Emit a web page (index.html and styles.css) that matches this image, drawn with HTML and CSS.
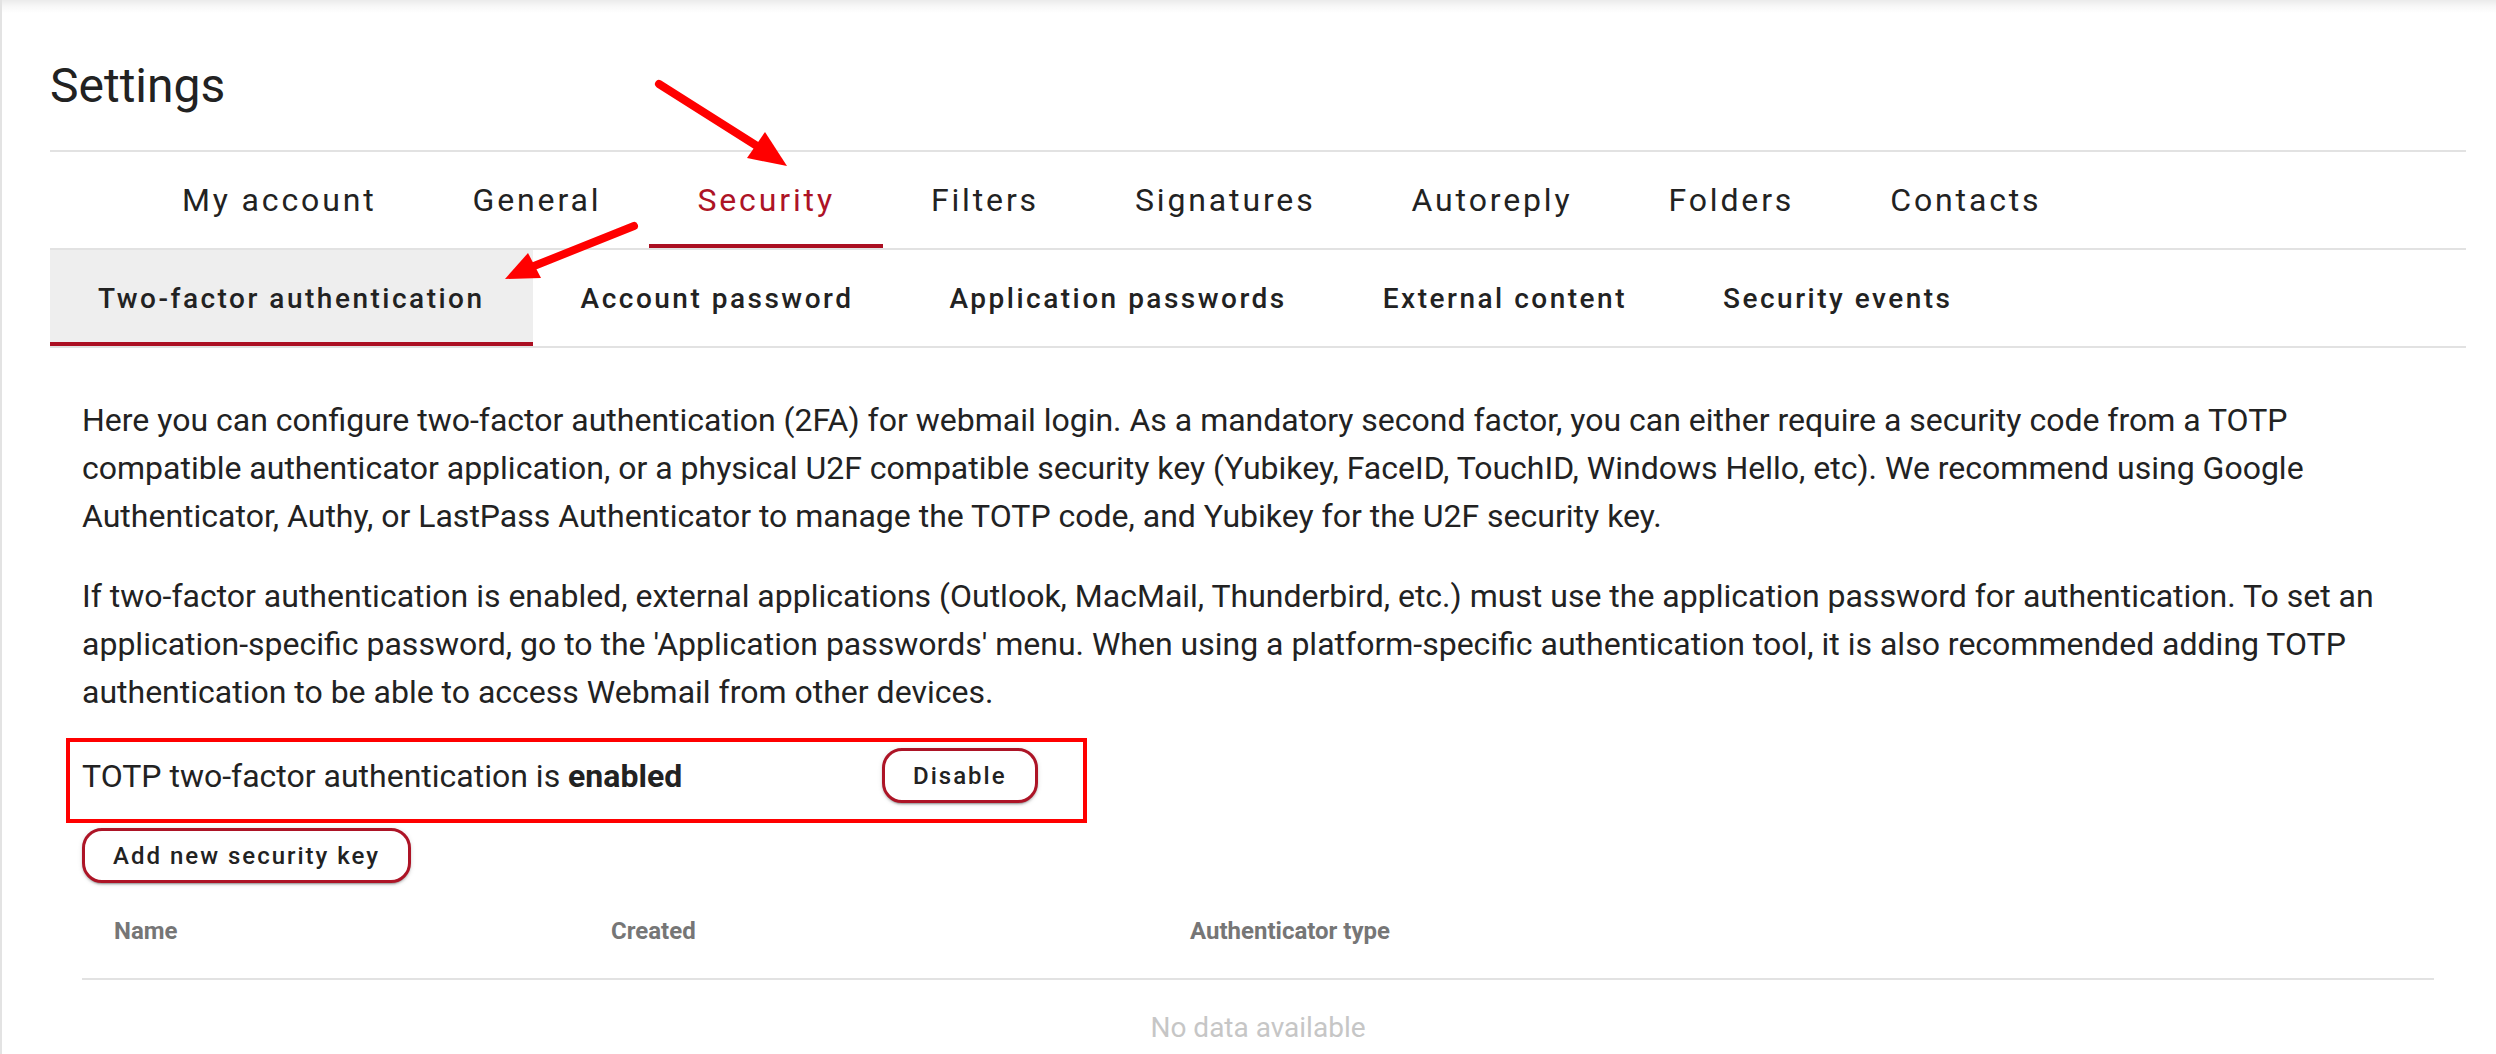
FILE: index.html
```html
<!DOCTYPE html>
<html lang="en">
<head>
<meta charset="utf-8">
<title>Settings</title>
<link rel="stylesheet" href="styles.css">
</head>
<body>
<div class="page">
  <div class="card">
    <h1 class="title">Settings</h1>
    <nav class="tabs main-tabs">
      <a class="tab">My account</a>
      <a class="tab">General</a>
      <a class="tab active">Security</a>
      <a class="tab">Filters</a>
      <a class="tab">Signatures</a>
      <a class="tab">Autoreply</a>
      <a class="tab">Folders</a>
      <a class="tab">Contacts</a>
    </nav>
    <nav class="tabs sub-tabs">
      <a class="subtab active">Two-factor authentication</a>
      <a class="subtab">Account password</a>
      <a class="subtab">Application passwords</a>
      <a class="subtab">External content</a>
      <a class="subtab">Security events</a>
    </nav>
    <section class="content">
      <p class="text">Here you can configure two-factor authentication (2FA) for webmail login. As a mandatory second factor, you can either require a security code from a TOTP compatible authenticator application, or a physical U2F compatible security key (Yubikey, FaceID, TouchID, Windows Hello, etc). We recommend using Google Authenticator, Authy, or LastPass Authenticator to manage the TOTP code, and Yubikey for the U2F security key.</p>
      <p class="text">If two-factor authentication is enabled, external applications (Outlook, MacMail, Thunderbird, etc.) must use the application password for authentication. To set an application-specific password, go to the 'Application passwords' menu. When using a platform-specific authentication tool, it is also recommended adding TOTP authentication to be able to access Webmail from other devices.</p>
      <div class="totp-row">
        <span class="totp-label">TOTP two-factor authentication is <b>enabled</b></span>
        <button class="btn">Disable</button>
      </div>
      <button class="btn">Add new security key</button>
      <table class="keys">
        <colgroup>
          <col class="col-name">
          <col class="col-created">
          <col>
        </colgroup>
        <thead>
          <tr><th>Name</th><th>Created</th><th>Authenticator type</th></tr>
        </thead>
        <tbody>
          <tr><td class="empty" colspan="3">No data available</td></tr>
        </tbody>
      </table>
    </section>
  </div>
  <div class="annot-box"></div>
  <svg class="annot-arrows" width="2496" height="1054" viewBox="0 0 2496 1054">
    <line x1="659" y1="84" x2="757" y2="146" stroke="#ff0000" stroke-width="8" stroke-linecap="round"/>
    <polygon points="787,166 747,158 765,132" fill="#ff0000"/>
    <line x1="634" y1="226" x2="534" y2="266" stroke="#ff0000" stroke-width="8" stroke-linecap="round"/>
    <polygon points="505,279 528,253 541,278" fill="#ff0000"/>
  </svg>
</div>
</body>
</html>
```

FILE: styles.css
```css
* { box-sizing: border-box; }

html, body {
  margin: 0;
  padding: 0;
  background: #ffffff;
}

body {
  font-family: Roboto, "Liberation Sans", Arial, sans-serif;
  color: rgba(0, 0, 0, 0.87);
}

.page {
  position: relative;
  min-height: 1054px;
  border-left: 2px solid #e3e3e3;
  background: linear-gradient(#ebebeb 0, #f7f7f7 6px, #ffffff 13px);
  padding: 0 30px 0 48px;
  overflow: hidden;
}

.title {
  margin: 0;
  padding: 54px 0 32px;
  font-size: 48px;
  font-weight: 400;
  line-height: 64px;
  color: #222222;
}

.tabs {
  display: flex;
  height: 98px;
  border-bottom: 2px solid #e2e2e2;
}

.main-tabs {
  height: 100px;
  border-top: 2px solid #e2e2e2;
  padding-left: 84px;
}

.tab {
  display: flex;
  align-items: center;
  padding: 0 48px;
  font-size: 32px;
  letter-spacing: 2.86px;
  color: #222222;
}

.tab.active {
  color: #ad1326;
  box-shadow: inset 0 -4px 0 #ab0f22;
}

.subtab {
  display: flex;
  align-items: center;
  padding: 0 48px;
  font-size: 28px;
  font-weight: 500;
  letter-spacing: 2.5px;
  color: #222222;
}

.subtab.active {
  background: #eeeeee;
  box-shadow: inset 0 -4px 0 #ab0f22;
}

.content {
  padding: 48px 32px 0;
}

.text {
  margin: 0 0 32px;
  font-size: 32px;
  line-height: 48px;
  color: #222222;
}

.totp-row {
  display: flex;
  align-items: center;
  height: 55px;
  margin-bottom: 25px;
}

.totp-label {
  width: 800px;
  font-size: 32px;
  color: #222222;
}

.totp-label b {
  font-weight: 700;
}

.btn {
  display: inline-flex;
  align-items: center;
  justify-content: center;
  height: 55px;
  padding: 0 28px;
  border: 3px solid #ad1426;
  border-radius: 20px;
  background: #ffffff;
  font-family: Roboto, "Liberation Sans", Arial, sans-serif;
  font-size: 24px;
  font-weight: 500;
  letter-spacing: 2px;
  color: #222222;
  box-shadow: 0 3px 1px -2px rgba(0, 0, 0, 0.2), 0 2px 2px 0 rgba(0, 0, 0, 0.14), 0 1px 5px 0 rgba(0, 0, 0, 0.12);
}

.keys {
  width: 100%;
  border-collapse: collapse;
  table-layout: fixed;
}

.col-name { width: 497px; }
.col-created { width: 579px; }

.keys th {
  height: 96px;
  padding: 0 32px;
  text-align: left;
  font-size: 24px;
  font-weight: 700;
  color: #767676;
  border-bottom: 2px solid #e2e2e2;
}

.keys td.empty {
  height: 96px;
  text-align: center;
  font-size: 28px;
  color: #c6c6c6;
}

.annot-box {
  position: absolute;
  left: 64px;
  top: 738px;
  width: 1021px;
  height: 85px;
  border: 4px solid #ff0000;
  pointer-events: none;
}

.annot-arrows {
  position: absolute;
  left: -2px;
  top: 0;
  pointer-events: none;
}
```
